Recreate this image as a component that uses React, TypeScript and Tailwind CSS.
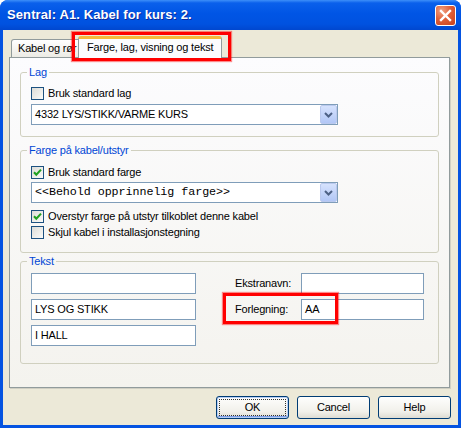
import React from "react";

const Checkbox = ({ checked, label }: { checked?: boolean; label: string }) => (
  <div className="flex h-[13px] items-center gap-[4px]">
    <span className="flex h-[13px] w-[13px] items-center justify-center border border-[#1c5180] bg-[linear-gradient(135deg,#dcdcd7_0%,#fbfbf9_100%)]">
      {checked && (
        <svg width="9" height="9" viewBox="0 0 9 9">
          <path d="M1 4.2 L3.3 6.6 L8 1.6" fill="none" stroke="#21a121" strokeWidth="2.1" />
        </svg>
      )}
    </span>
    <span className="leading-[13px]">{label}</span>
  </div>
);

const Combo = ({ value, mono }: { value: string; mono?: boolean }) => (
  <div className="flex h-[21px] w-[307px] items-center border border-[#7f9db9] bg-white">
    <span
      className={
        mono
          ? "flex-1 pl-[3px] font-['Liberation_Mono',monospace] text-[11.7px] tracking-[-0.05px]"
          : "flex-1 pl-[3px]"
      }
    >
      {value}
    </span>
    <span className="flex h-[19px] w-[17px] items-center justify-center rounded-[2px] border border-[#bac9ee] bg-[linear-gradient(to_bottom,#d6e2fd,#b2c7f6)]">
      <svg width="9" height="6" viewBox="0 0 9 6">
        <path d="M1 1 L4.5 4.5 L8 1" fill="none" stroke="#4d6185" strokeWidth="2" />
      </svg>
    </span>
  </div>
);

const TextBox = ({ value, wide }: { value?: string; wide?: boolean }) => (
  <div
    className={
      wide
        ? "flex h-[21px] w-[165px] items-center border border-[#7f9db9] bg-white pl-[3px]"
        : "flex h-[21px] w-[123px] items-center border border-[#7f9db9] bg-white pl-[3px]"
    }
  >
    {value}
  </div>
);

const Group = ({ title, children }: { title: string; children: React.ReactNode }) => (
  <fieldset className="rounded-[3px] border border-[#d0d0bf] p-0">
    <legend className="ml-[6px] px-[2px] leading-[14px] text-[#0046d5]">{title}</legend>
    {children}
  </fieldset>
);

const Button = ({ label, isDefault }: { label: string; isDefault?: boolean }) => (
  <div
    className={
      isDefault
        ? "flex h-[23px] w-[73px] items-center justify-center rounded-[3px] border border-[#003c74] bg-[linear-gradient(to_bottom,#fefefd,#f1f0ea_70%,#dedcd2)] p-[2px] shadow-[inset_0_0_0_1px_#b7cef5,inset_0_-1px_0_1px_#7c9ee8]"
        : "flex h-[23px] w-[73px] items-center justify-center rounded-[3px] border border-[#003c74] bg-[linear-gradient(to_bottom,#fefefd,#f1f0ea_70%,#dedcd2)]"
    }
  >
    {isDefault ? (
      <span className="flex h-full w-full items-center justify-center border border-dotted border-[#333]">
        {label}
      </span>
    ) : (
      label
    )}
  </div>
);

export default function App() {
  return (
    <div className="relative flex h-[428px] w-[461px] flex-col overflow-hidden rounded-t-[8px] bg-[#0453e1] font-['Liberation_Sans',Arial,sans-serif] text-[11px] tracking-[-0.18px] text-black">
      {/* title bar */}
      <div className="flex h-[30px] items-center justify-between bg-[linear-gradient(to_bottom,#3d8ff9_0%,#0a60eb_10%,#0055e5_45%,#0052e0_80%,#0047cf_100%)] pl-[7px] pr-[5px]">
        <span className="text-[13px] font-bold tracking-[0.1px] text-white [text-shadow:1px_1px_0_#0b2a9c]">
          Sentral: A1. Kabel for kurs: 2.
        </span>
        <span className="flex h-[21px] w-[21px] items-center justify-center rounded-[3px] border border-white bg-[radial-gradient(circle_at_30%_25%,#f0a283_0%,#e0603a_45%,#c8401a_100%)]">
          <svg width="13" height="13" viewBox="0 0 13 13">
            <path d="M2 2 L11 11 M11 2 L2 11" stroke="white" strokeWidth="2.4" strokeLinecap="square" />
          </svg>
        </span>
      </div>

      {/* body */}
      <div className="mx-[3px] mb-[3px] flex flex-1 flex-col bg-[#ece9d8]">
        {/* tabs */}
        <div className="flex h-[27px] items-end pl-[8px]">
          <div className="h-[18px] w-[80px] overflow-hidden whitespace-nowrap rounded-t-[3px] border-x border-t border-[#919b9c] bg-[linear-gradient(to_bottom,#ffffff,#ecebe5)] pl-[6px] leading-[16px]">
            Kabel og rør
          </div>
          <div className="relative z-10 -mb-[1px] -ml-[13px] h-[22px] w-[144px] rounded-t-[3px] border-x border-t-[3px] border-x-[#919b9c] border-t-[#f7b93c] bg-[#fcfcfe] pl-[8px] leading-[17px] whitespace-nowrap">
            Farge, lag, visning og tekst
          </div>
        </div>

        {/* panel */}
        <div className="ml-[6px] flex w-[441px] flex-col border border-[#919b9c] bg-[linear-gradient(to_bottom,#fcfcfe,#f4f3ee)] px-[10px] pb-[23px] pt-[7px] shadow-[1px_1px_0_#d0cfc3]">
          <Group title="Lag">
            <div className="flex flex-col gap-[4px] pb-[11px] pl-[10px] pt-[8px]">
              <Checkbox label="Bruk standard lag" />
              <Combo value="4332 LYS/STIKK/VARME KURS" />
            </div>
          </Group>

          <div className="mt-[6px]">
            <Group title="Farge på kabel/utstyr">
              <div className="flex flex-col pb-[13px] pl-[10px] pt-[9px]">
                <Checkbox checked label="Bruk standard farge" />
                <div className="mt-[3px]">
                  <Combo mono value="<<Behold opprinnelig farge>>" />
                </div>
                <div className="mt-[7px]">
                  <Checkbox checked label="Overstyr farge på utstyr tilkoblet denne kabel" />
                </div>
                <div className="mt-[3px]">
                  <Checkbox label="Skjul kabel i installasjonstegning" />
                </div>
              </div>
            </Group>
          </div>

          <div className="mt-[1px]">
            <Group title="Tekst">
              <div className="flex pb-[17px] pl-[10px] pt-[5px]">
                <div className="flex flex-col gap-[5px]">
                  <TextBox wide />
                  <TextBox wide value="LYS OG STIKK" />
                  <TextBox wide value="I HALL" />
                </div>
                <div className="ml-[39px] flex flex-col gap-[5px]">
                  <div className="flex items-center">
                    <span className="w-[66px]">Ekstranavn:</span>
                    <TextBox />
                  </div>
                  <div className="flex items-center">
                    <span className="w-[66px]">Forlegning:</span>
                    <TextBox value="AA" />
                  </div>
                </div>
              </div>
            </Group>
          </div>
        </div>

        {/* buttons */}
        <div className="mt-[8px] flex justify-end gap-[8px] pr-[7px]">
          <Button isDefault label="OK" />
          <Button label="Cancel" />
          <Button label="Help" />
        </div>
      </div>

      {/* red annotation marks */}
      <div className="absolute left-[72px] top-[32px] h-[29px] w-[159px] border-[3px] border-[#ff0000] shadow-[0_0_1px_1px_rgba(255,0,0,0.45)]" />
      <div className="absolute left-[223px] top-[293px] h-[31px] w-[115px] border-[3px] border-[#ff0000] shadow-[0_0_1px_1px_rgba(255,0,0,0.45)]" />
    </div>
  );
}
